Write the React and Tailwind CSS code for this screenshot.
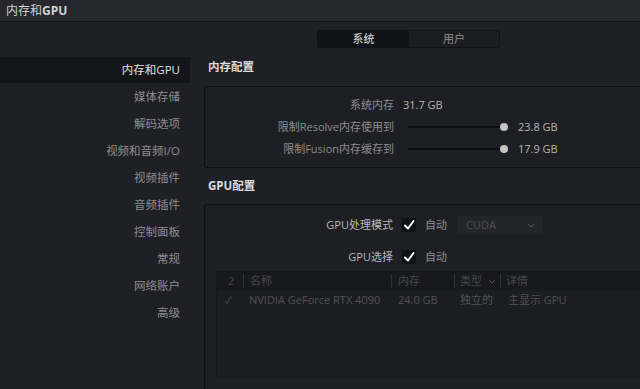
import React from "react";

const font = { fontFamily: "'Open Sans', 'Noto Sans CJK SC', sans-serif" };

function Check() {
  return (
    <div className="w-[14px] h-[14px] rounded-[2px] bg-[#101114] flex items-center justify-center">
      <svg width="12" height="12" viewBox="0 0 12 12">
        <path d="M2 6.5 L5 9.5 L10.5 2" fill="none" stroke="#ffffff" strokeWidth="2" strokeLinecap="round" strokeLinejoin="round" />
      </svg>
    </div>
  );
}

function Slider() {
  return (
    <div className="relative w-[100px] h-[10px] flex items-center">
      <div className="w-full h-[2px] bg-[#0c0d10]" />
      <div className="absolute left-[92px] top-[1px] w-[8px] h-[8px] rounded-full bg-[#c4c4c4]" />
    </div>
  );
}

const items = ["内存和GPU", "媒体存储", "解码选项", "视频和音频I/O", "视频插件", "音频插件", "控制面板", "常规", "网络账户", "高级"];

export default function App() {
  return (
    <div className="w-[640px] h-[389px] bg-[#1f2025] overflow-hidden text-[11px]" style={font}>
      <div className="h-[22px] bg-[#26272c] border-b border-[#121316] flex items-center pl-[6px] text-[12px] text-[#d4d4d4]">
        内存和<span className="font-bold">GPU</span>
      </div>
      <div className="flex">
        <div className="w-[204px] shrink-0 pt-[35px]">
          {items.map((t, i) => (
            <div
              key={t}
              className={
                i === 0
                  ? "w-[190px] h-[26px] mb-[1px] flex items-center justify-end pr-[10px] bg-[#141519] text-[#e2e2e2] text-[11.5px]"
                  : "w-[190px] h-[26px] mb-[1px] flex items-center justify-end pr-[10px] text-[#8c8d91] text-[11.5px]"
              }
            >
              {t}
            </div>
          ))}
        </div>
        <div className="flex-1 flex flex-col">
          <div className="pl-[113px] pt-[8px]">
            <div className="w-[183px] h-[18px] flex rounded-[2px] border border-[#111215] bg-[#1c1d21]">
              <div className="w-[91px] h-full bg-[#121316] flex items-center justify-center text-[#e0e0e0]">系统</div>
              <div className="flex-1 flex items-center justify-center text-[#8c8d91]">用户</div>
            </div>
          </div>
          <div className="h-[38px] flex items-center pl-[4px] text-[#dcdcdc] text-[11.5px] font-bold">内存配置</div>
          <div className="w-[460px] h-[82px] border border-[#0f1013] rounded-[2px] bg-[#1e1f24] pt-[7px]">
            <div className="h-[22px] flex items-center">
              <div className="w-[189px] text-right text-[#8c8d91]">系统内存</div>
              <div className="ml-[9px] text-[#b5b5b5]">31.7 GB</div>
            </div>
            <div className="h-[22px] flex items-center">
              <div className="w-[189px] text-right text-[#8c8d91]">限制Resolve内存使用到</div>
              <div className="ml-[14px]"><Slider /></div>
              <div className="ml-[10px] text-[#b5b5b5]">23.8 GB</div>
            </div>
            <div className="h-[22px] flex items-center">
              <div className="w-[189px] text-right text-[#8c8d91]">限制Fusion内存缓存到</div>
              <div className="ml-[14px]"><Slider /></div>
              <div className="ml-[10px] text-[#b5b5b5]">17.9 GB</div>
            </div>
          </div>
          <div className="h-[36px] flex items-center pl-[4px] text-[#dcdcdc] text-[11.5px] font-bold">GPU配置</div>
          <div className="w-[460px] h-[200px] border border-[#0f1013] rounded-[2px] bg-[#1e1f24] pt-[10px]">
            <div className="h-[20px] flex items-center">
              <div className="w-[188px] text-right text-[#b8b8b8]">GPU处理模式</div>
              <div className="ml-[9px]"><Check /></div>
              <div className="ml-[9px] text-[#8c8d91]">自动</div>
              <div className="ml-[10px] w-[86px] h-[18px] bg-[#24252a] flex items-center justify-between pl-[9px] pr-[8px] text-[#4d4f54]">
                <span>CUDA</span>
                <svg width="8" height="5" viewBox="0 0 8 5"><path d="M1 1 L4 4 L7 1" fill="none" stroke="#55575c" strokeWidth="1" /></svg>
              </div>
            </div>
            <div className="h-[20px] mt-[12px] flex items-center">
              <div className="w-[188px] text-right text-[#b8b8b8]">GPU选择</div>
              <div className="ml-[9px]"><Check /></div>
              <div className="ml-[9px] text-[#8c8d91]">自动</div>
            </div>
            <div className="ml-[11px] mt-[4px] w-[440px] h-[107px] border border-[#17181c] bg-[#1c1d21] text-[#45474c]">
              <div className="h-[18px] bg-[#18191d] flex items-center">
                <div className="w-[26px] pl-[11px]">2</div>
                <div className="w-[1px] h-[14px] bg-[#303237]" />
                <div className="w-[147px] pl-[6px]">名称</div>
                <div className="w-[1px] h-[14px] bg-[#303237]" />
                <div className="w-[62px] pl-[6px]">内存</div>
                <div className="w-[1px] h-[14px] bg-[#303237]" />
                <div className="w-[45px] pl-[5px] flex items-center justify-between pr-[4px]">
                  <span>类型</span>
                  <svg width="8" height="5" viewBox="0 0 8 5"><path d="M1 1 L4 4 L7 1" fill="none" stroke="#505257" strokeWidth="1" /></svg>
                </div>
                <div className="w-[1px] h-[14px] bg-[#303237]" />
                <div className="pl-[5px]">详情</div>
              </div>
              <div className="h-[20px] flex items-center text-[#505257]">
                <div className="w-[27px] pl-[8px] text-[10px]">✓</div>
                <div className="w-[148px] pl-[5px] whitespace-nowrap">NVIDIA GeForce RTX 4090</div>
                <div className="w-[63px] pl-[6px]">24.0 GB</div>
                <div className="w-[46px] pl-[5px]">独立的</div>
                <div className="pl-[7px]">主显示 GPU</div>
              </div>
            </div>
          </div>
        </div>
      </div>
    </div>
  );
}
